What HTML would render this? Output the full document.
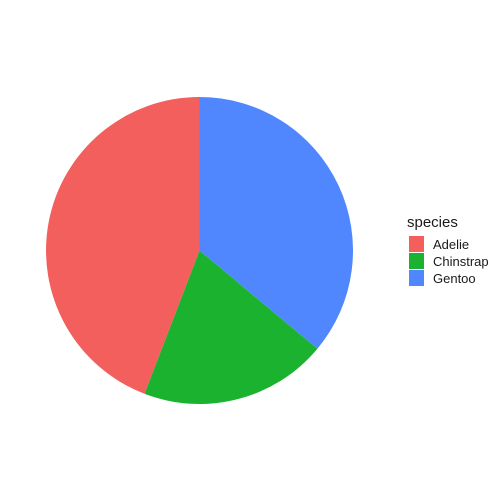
<html><body style="margin:0;background:#fff">
<svg width="504" height="504" xmlns="http://www.w3.org/2000/svg" font-family="Liberation Sans, sans-serif">
<path d="M199.5,250.5 L199.5,97 A153.5,153.5 0 0 1 317.4,348.8 Z" fill="#5087FF"/>
<path d="M199.5,250.5 L317.4,348.8 A153.5,153.5 0 0 1 144.5,393.8 Z" fill="#1AB22F"/>
<path d="M199.5,250.5 L144.5,393.8 A153.5,153.5 0 0 1 199.5,97 Z" fill="#F25F5C"/>
<text x="407" y="227" font-size="15" fill="#1a1a1a">species</text>
<rect x="409" y="236" width="15" height="16" fill="#F25F5C"/>
<rect x="409" y="253" width="15" height="16" fill="#1AB22F"/>
<rect x="409" y="270" width="15" height="16" fill="#5087FF"/>
<text x="433" y="249" font-size="13" fill="#1a1a1a">Adelie</text>
<text x="433" y="266" font-size="13" fill="#1a1a1a">Chinstrap</text>
<text x="433" y="283" font-size="13" fill="#1a1a1a">Gentoo</text>
</svg>
</body></html>
